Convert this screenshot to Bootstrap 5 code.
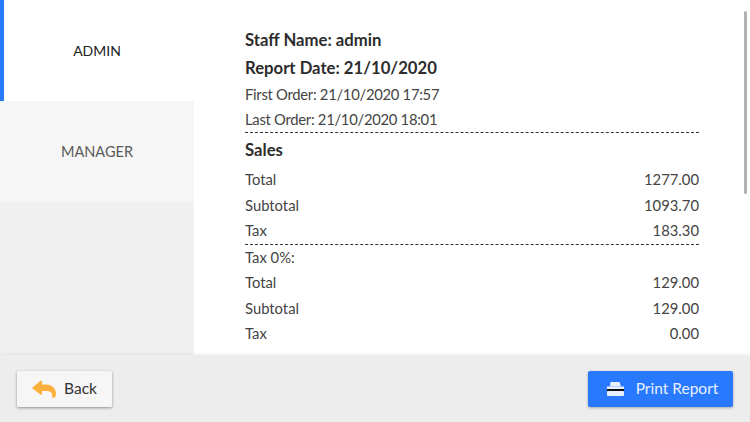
<!DOCTYPE html>
<html lang="en">
<head>
<meta charset="utf-8">
<title>Staff Report</title>
<link href="https://cdn.jsdelivr.net/npm/bootstrap@5.3.0/dist/css/bootstrap.min.css" rel="stylesheet">
<style>
html,body{height:100%;overflow:hidden}
body{font-family:"Lato","Noto Sans",sans-serif;color:#333;background:#fff}
.shell{width:750px;height:422px}
.main-area{height:355px}
.side{width:194px;background:#f0f0f0}
.tab-item{height:101px;font-size:14.5px;background:#f6f6f6;color:#5a5a5a}
.tab-item.on{background:#fff;color:#222;border-left:4px solid #2979ff;padding-right:4px;font-size:14px}
.report{padding:26px 51px 0 51px;position:relative;overflow:hidden;background:#fff}
.head-line{font-size:16.7px;font-weight:700;height:28px;line-height:28px;color:#2c2c2c}
.line{font-size:14.8px;height:25.5px;line-height:25.5px;color:#444}
.date-line{height:25px;line-height:25px;letter-spacing:-.28px}
.dash{border-top:1.5px dashed #333;height:0}
.sales-head{height:34px;line-height:34px;font-size:16.7px;font-weight:700;color:#2c2c2c}
.thumb{position:absolute;right:3.5px;top:11px;width:3px;height:183px;background:#b0b0b0;border-radius:2px}
.foot{height:67px;background:#ededed;padding:16px 17px 15px;box-shadow:0 -1px 3px rgba(0,0,0,.06);position:relative}
.act{height:36px;border:0;border-radius:1px;font-size:15.5px}
.act-back{width:95px;background:#f6f6f6;color:#333;box-shadow:0 1px 3px rgba(0,0,0,.4)}
.act-print{width:145px;background:#2979ff;color:#e8f0ff;box-shadow:0 1px 3px rgba(0,0,0,.3);border-radius:2px;padding-left:10px}
</style>
</head>
<body>
<div class="shell d-flex flex-column">
  <div class="main-area d-flex">
    <div class="side flex-shrink-0">
      <div class="tab-item on d-flex align-items-center justify-content-center">ADMIN</div>
      <div class="tab-item d-flex align-items-center justify-content-center">MANAGER</div>
    </div>
    <div class="report flex-grow-1">
      <div class="head-line">Staff Name: admin</div>
      <div class="head-line">Report Date: 21/10/2020</div>
      <div class="line date-line">First Order: 21/10/2020 17:57</div>
      <div class="line date-line">Last Order: 21/10/2020 18:01</div>
      <div class="dash"></div>
      <div class="sales-head">Sales</div>
      <div class="line d-flex justify-content-between"><span>Total</span><span>1277.00</span></div>
      <div class="line d-flex justify-content-between"><span>Subtotal</span><span>1093.70</span></div>
      <div class="line d-flex justify-content-between"><span>Tax</span><span>183.30</span></div>
      <div class="dash"></div>
      <div class="line">Tax 0%:</div>
      <div class="line d-flex justify-content-between"><span>Total</span><span>129.00</span></div>
      <div class="line d-flex justify-content-between"><span>Subtotal</span><span>129.00</span></div>
      <div class="line d-flex justify-content-between"><span>Tax</span><span>0.00</span></div>
      <div class="thumb"></div>
    </div>
  </div>
  <div class="foot d-flex justify-content-between align-items-start">
    <button class="act act-back d-flex align-items-center justify-content-center gap-2" type="button">
      <svg width="24" height="18" viewBox="0 0 24 18" aria-hidden="true"><path d="M0 8 9 0.5 10 1V4.5H14C20 4.5 24 8.5 24 13.5 24 15 23.6 16.5 23 17.5H19.8C20.2 16 20.3 15 20 14 19.3 12 17.5 11 15 11H10V14.5L9 15Z" fill="#fbb03b"/></svg>
      <span>Back</span>
    </button>
    <button class="act act-print d-flex align-items-center justify-content-center" type="button">
      <svg width="17" height="14" viewBox="0 0 17 14" aria-hidden="true"><path d="M3.5 0H12.5L14 4.5H3Z" fill="#e8f0ff"/><rect x="0" y="4.5" width="17" height="2.5" fill="#e8f0ff"/><rect x="0" y="7" width="17" height="2" fill="#111"/><rect x="0" y="9" width="17" height="5" rx="1" fill="#e8f0ff"/></svg>
      <span class="ms-2 ps-1">Print Report</span>
    </button>
  </div>
</div>
<script src="https://cdn.jsdelivr.net/npm/bootstrap@5.3.0/dist/js/bootstrap.bundle.min.js"></script>
</body>
</html>
